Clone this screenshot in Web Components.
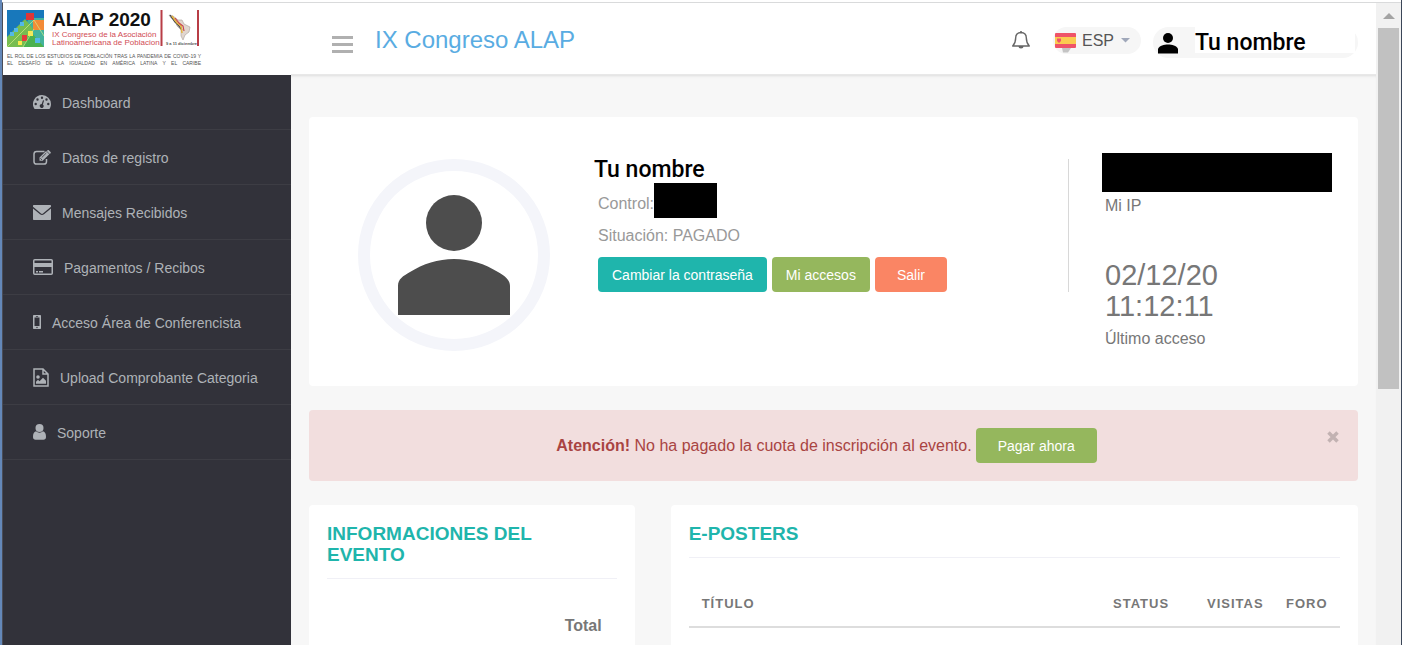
<!DOCTYPE html>
<html lang="es">
<head>
<meta charset="utf-8">
<title>IX Congreso ALAP</title>
<style>
html, body { margin: 0; height: 100%; }
body { font-family: "Liberation Sans", Arial, sans-serif; font-size: 16px; color: #777; background: #fff; overflow: hidden; }
</style>
</head>
<body>
<app-frame>
  <brand-logo slot="brand"></brand-logo>
  <top-bar slot="bar"></top-bar>
  <side-menu slot="menu">
    <menu-item icon="gauge">Dashboard</menu-item>
    <menu-item icon="edit">Datos de registro</menu-item>
    <menu-item icon="mail">Mensajes Recibidos</menu-item>
    <menu-item icon="card">Pagamentos / Recibos</menu-item>
    <menu-item icon="phone">Acceso Área de Conferencista</menu-item>
    <menu-item icon="file">Upload Comprobante Categoria</menu-item>
    <menu-item icon="user">Soporte</menu-item>
  </side-menu>
  <profile-card></profile-card>
  <alert-bar></alert-bar>
  <event-panels></event-panels>
</app-frame>

<script>
const define = (name, html, setup) => customElements.define(name, class extends HTMLElement {
  constructor() {
    super();
    const t = document.createElement('template');
    t.innerHTML = '<style>*{box-sizing:border-box}</style>' + html;
    this.attachShadow({ mode: 'open' }).append(t.content.cloneNode(true));
  }
  connectedCallback() { if (setup) setup(this, this.shadowRoot); }
});

const icons = {
  gauge: [18, 16, '<path fill="currentColor" fill-rule="evenodd" d="M9 1a9 9 0 0 1 9 9c0 1.800-.5 3.400-1.400 4.800-.2.200-.4.300-.7.300H2.100c-.3 0-.5-.1-.7-.3A9 9 0 0 1 9 1zM9 2.500a1.200 1.200 0 1 0 0 2.400 1.200 1.200 0 0 0 0-2.400zM4.500 4.300a1.200 1.200 0 1 0 0 2.400 1.200 1.200 0 0 0 0-2.400zM13.500 4.300a1.200 1.200 0 1 0 0 2.400 1.200 1.200 0 0 0 0-2.400zM2.700 8.800a1.200 1.200 0 1 0 0 2.400 1.200 1.200 0 0 0 0-2.400zM15.300 8.800a1.200 1.200 0 1 0 0 2.400 1.200 1.200 0 0 0 0-2.400zM10 6.200 8.700 10a2 2 0 1 0 1.200.4l1.200-3.900z"/>'],
  edit: [18, 15, '<path fill="none" stroke="currentColor" stroke-width="1.500" d="M11.500 1.500H3.600A2.600 2.600 0 0 0 1 4.100v7.300A2.600 2.600 0 0 0 3.600 14h7.300a2.600 2.600 0 0 0 2.600-2.600V9"/><path fill="currentColor" d="m6.500 7.600 6.600-6.600 3.200 3.200-6.600 6.600H6.500zM13.800.9l.8-.7c.4-.3.800-.3 1.200 0l1.800 1.800c.3.400.3.800 0 1.200l-.8.700z"/><path stroke="#32323a" stroke-width=".8" d="m8.700 7.600 4.600-4.600M7.300 8.300l1.700 1.700"/>'],
  mail: [18, 15, '<path fill="currentColor" d="M1 0h16c.6 0 1 .4 1 1v.8L10 8.600c-.7.500-1.300.5-2 0L0 1.800V1c0-.6.400-1 1-1z"/><path fill="currentColor" d="m0 3.400 7 5.900c1.400 1 2.600 1 4 0l7-5.900V14c0 .6-.4 1-1 1H1c-.6 0-1-.4-1-1z"/>'],
  card: [20, 16, '<rect x=".75" y=".75" width="18.500" height="14.500" rx="1" fill="none" stroke="currentColor" stroke-width="1.500"/><path fill="currentColor" d="M1 4h18v4H1zM3 12h2v1.500H3zM6 12h4v1.500H6z"/>'],
  phone: [8, 14, '<path fill="currentColor" fill-rule="evenodd" d="M1 0h6c.6 0 1 .4 1 1v12c0 .6-.4 1-1 1H1c-.6 0-1-.4-1-1V1C0 .4.400 0 1 0zM1.500 2.500V11h5V2.500zM2.900 1v.7h2.200V1zM4 11.800a.7.700 0 1 0 0 1.400.7.700 0 0 0 0-1.400z"/>'],
  file: [16, 19, '<path fill="none" stroke="currentColor" stroke-width="1.500" d="M1 1h9l5 5v12H1zM10 1v5h5"/><circle cx="5" cy="9" r="1.800" fill="currentColor"/><path fill="currentColor" d="M3 15.800v-2l2-2 1.500 1.500L10 9.800l3 3v3z"/>'],
  user: [13, 16, '<circle cx="6.500" cy="4" r="4" fill="currentColor"/><path fill="currentColor" d="M3 7.200a5 5 0 0 0 7 0c2.200.5 3 2.600 3 5.800 0 1.800-1 2.800-2.600 2.800H2.600C1 15.800 0 14.800 0 13c0-3.200.8-5.300 3-5.800z"/>'],
  bell: [20, 20, '<path fill="none" stroke="currentColor" stroke-width="1.400" stroke-linejoin="round" d="M10 2.500c-3.600 0-5.300 2.400-5.300 5.300 0 3.700-.7 5.800-3 8.200h16.600c-2.300-2.400-3-4.500-3-8.200 0-2.900-1.700-5.300-5.300-5.300z"/><path fill="currentColor" d="M9.200 1h1.600v2H9.200zM7.500 16h5a2.500 2.500 0 0 1-5 0z"/>'],
  burger: [21, 18, '<path fill="currentColor" d="M0 0h21v3H0zM0 7h21v3H0zM0 14h21v3H0z"/>'],
  person: [20, 21, '<circle cx="10" cy="5" r="5" fill="currentColor"/><path fill="currentColor" d="M0 20.500v-4.800C1.500 12.800 6 11.500 10 11.500s8.500 1.300 10 4.200v4.800z"/>'],
  cross: [12, 12, '<path stroke="currentColor" stroke-width="3.500" d="m1.500 1.500 9 9m0-9-9 9"/>'],
  caret: [9, 5, '<path fill="currentColor" d="M0 0h9L4.500 4.500z"/>'],
  flag: [21, 20, '<path d="M7 15h9l-3 4.500H8z" fill="#c4c4c4"/><rect width="21" height="15" rx="1" fill="#ef5368"/><path fill="#fbcb50" d="M0 4h21v7H0z"/><path fill="#ef5368" d="M2 5.500h4V8L4 10 2 8z"/>']
};
define('ui-icon', '<style>:host{display:inline-flex;flex:none}svg{display:block}</style><svg aria-hidden="true"></svg>', (el, root) => {
  const [w, h, body] = icons[el.getAttribute('name')];
  const svg = root.querySelector('svg');
  svg.setAttribute('width', w); svg.setAttribute('height', h);
  svg.setAttribute('viewBox', `0 0 ${w} ${h}`);
  svg.innerHTML = body;
});

define('ui-button', `<style>
:host{display:inline-flex}
button{height:35px;padding:0 14px;border:0;border-radius:4px;background:#95b75d;color:#fff;font:inherit;font-size:14px;white-space:nowrap;cursor:pointer}
:host([tone=teal]) button{background:#1fb5ac}
:host([tone=coral]) button{background:#fa8564}
:host([wide]) button{padding:0 22px}
</style><button type="button"><slot></slot></button>`);

define('app-frame', `<style>
:host{display:grid;grid-template-columns:minmax(0,1fr) 25px;height:100vh;background:#fff;overflow:hidden;
  border-left:2px solid #6488b9;border-right:1px solid #3b4658;padding-top:2px}
.page{display:grid;grid-template-columns:288px minmax(0,1fr);grid-template-rows:72px minmax(0,1fr);border-left:1px solid #4a4d57;border-top:1px solid #d9dadb;overflow:hidden}
.menu{background:#32323a}
main{background:#f7f7f7;padding:42px 18px 0;display:flex;flex-direction:column;gap:24px;overflow:hidden;box-shadow:inset 0 3px 3px -2px #ddd}
.track{background:#f1f1f1;border-top:1px solid #d9dadb;display:flex;flex-direction:column;padding:0 2px}
.up{height:25px;display:grid;place-items:center;color:#a3a3a3}
.thumb{background:#c1c1c1;flex:0 0 58%;max-height:361px}
</style>
<div class="page">
  <div><slot name="brand"></slot></div>
  <slot name="bar"></slot>
  <div class="menu"><slot name="menu"></slot></div>
  <main><slot></slot></main>
</div>
<div class="track"><div class="up"><svg width="12" height="6"><path d="M0 6h12L6 0z" fill="currentColor"/></svg></div><div class="thumb"></div></div>`);

define('brand-logo', `<style>
:host{display:block;padding:6px 0 0 4px}
.top{display:flex;align-items:flex-start}
.art{margin-top:1px}
.words{width:116px;padding-left:8px;white-space:nowrap}
strong{display:block;font-size:19px;line-height:22px;color:#111}
.red{font-size:8px;line-height:8px;color:#d14b54}
.motto{margin-top:5px;font-size:5px;line-height:7px;color:#555;width:194px;text-align-last:justify}
</style>
<div class="top">
<svg class="art" width="37" height="37" viewBox="0 0 37 37"><path fill="#1878bb" d="M0 0h37v37H0z"/><path fill="#43b39c" d="M22 8h15v29H8z"/><path fill="#77bd50" d="M0 27 18 9l8 10-10 18H0z"/><path fill="#4bb14f" d="m24 22 13 15H16z"/><path fill="#de3637" d="M19 3h8v7h-8z"/><path fill="#f38b37" d="M26 10h11v10H26z"/><path fill="#e53b3b" d="M15 25h5v6h-5z"/><path fill="#fae94e" d="M21 21h5v5h-5zM11 31h4v4h-4z"/><path fill="#53b9e8" d="M7 18h4v4H7zM13 12h4v4h-4zM3 22h4v4H3zM28 28h5v5h-5z"/><path d="M0 37 27 10 37 26M16 37l11-18" fill="none" stroke="#d4ec85" stroke-width=".7"/></svg>
<div class="words"><strong>ALAP 2020</strong><div class="red">IX Congreso de la Asociación</div><div class="red">Latinoamericana de Poblacion</div></div>
<svg width="39" height="39" viewBox="0 0 39 39"><path d="M1.500 1v36M38 1v36" stroke="#b83d46" stroke-width="2"/><path fill="#e1d6cf" stroke="#a89d98" stroke-width=".6" d="m9 6 4 1 5 4 4 0 2 4 6 3-1 5-4 3-2 5-2-4 0-6-4-4-1-5-5-3z"/><path fill="none" stroke="#444" stroke-width="1.200" d="m10 6 5 7 3 3 4 5"/><path fill="none" stroke="#e3b33d" stroke-width="1.500" d="m12 7 5 7 4 3 1 7"/><path fill="none" stroke="#c9444b" stroke-width="1.200" d="m15 9 4 5 4 3 1 5"/><text x="6" y="36" font-size="4" font-family="Liberation Sans" font-weight="bold" fill="#555">9 a 11 diciembre</text></svg>
</div>
<div class="motto"><div>EL ROL DE LOS ESTUDIOS DE POBLACIÓN TRAS LA PANDEMIA DE COVID-19 Y</div><div>EL DESAFÍO DE LA IGUALDAD EN AMÉRICA LATINA Y EL CARIBE</div></div>`);

define('top-bar', `<style>
:host{display:flex;align-items:flex-start;padding:24px 18px 0 41px;border-bottom:1px solid #e8e8e8;background:#fff}
button{border:0;padding:0;background:none;cursor:pointer;display:flex}
.burger{color:#b0b0b0;margin-top:9px}
h1{margin:0 auto 0 22px;font-size:24px;font-weight:400;line-height:26px;color:#59ace2;white-space:nowrap}
.bell{color:#666;margin:3px 22px 0 0}
.lang{display:flex;align-items:center;gap:6px;height:27px;border-radius:14px;background:#f6f6f6;padding:0 11px 0 2px;margin-right:12px;color:#a0a8ba}
.lang ui-icon:first-child{margin-top:4px}
select{appearance:none;border:0;background:none;padding:0;width:33px;font:inherit;font-size:16px;color:#555}
.me{display:flex;width:205px;height:31px;border-radius:16px;background:#f6f6f6;color:#000;padding:0 3px 5px 5px;gap:17px}
.me ui-icon{margin-top:6px}
.me span{flex:1;text-align:left;background:#fff;font:500 23px/32px Roboto,sans-serif;height:26px;white-space:nowrap}
</style>
<button class="burger" type="button" aria-label="Menú"><ui-icon name="burger"></ui-icon></button>
<h1>IX Congreso ALAP</h1>
<button class="bell" type="button" aria-label="Avisos"><ui-icon name="bell"></ui-icon></button>
<div class="lang"><ui-icon name="flag"></ui-icon><select aria-label="Idioma"><option>ESP</option></select><ui-icon name="caret"></ui-icon></div>
<button class="me" type="button"><ui-icon name="person"></ui-icon><span>Tu nombre</span></button>`);

define('side-menu', '<style>:host{display:block}nav{display:flex;flex-direction:column}</style><nav><slot></slot></nav>');
define('menu-item', `<style>
:host{display:block}
a{display:flex;align-items:center;gap:11px;height:55px;padding:0 0 0 30px;border-bottom:1px solid #3d3d44;color:#aeb2b7;text-decoration:none;font-size:14px;white-space:nowrap}
span{padding-top:2px}
</style><a href="#"><span><slot></slot></span></a>`, (el, root) => {
  const link = root.querySelector('a');
  if (link.querySelector('ui-icon')) return;
  const icon = document.createElement('ui-icon');
  icon.setAttribute('name', el.getAttribute('icon'));
  link.prepend(icon);
});

define('profile-card', `<style>
:host{display:grid;grid-template-columns:285fr 475fr 289fr;align-items:start;background:#fff;border-radius:4px;padding:42px 0 35px}
.avatar{justify-self:center;margin-left:4px;width:192px;height:192px;border:12px solid #f4f5fa;border-radius:50%}
.info{height:133px;border-right:1px solid #d8d8d8}
h2{margin:0 0 2px;font:500 23px/22px Roboto,sans-serif;color:#000}
.details{padding-left:4px;color:#999}
.row{display:flex;align-items:center;height:35px}
.control span{padding-top:7px}
.mask{background:#000}
.control .mask{width:63px;height:35px}
.actions{display:flex;gap:5px;margin-top:4px}
.stats{padding:0 26px 0 33px;margin-top:-6px}
.stats .mask{height:39px}
.stats dl{margin:0 3px;display:flex;flex-direction:column}
dt{line-height:18px;order:2;margin-top:5px}
dd{margin:0;order:1;font-size:29px;line-height:31px}
.last{padding-top:45px}
dl.last dt{margin-top:8px}
</style>
<svg class="avatar" viewBox="0 0 168 168" role="img" aria-label="Avatar"><circle cx="84" cy="52" r="28" fill="#4d4d4d"/><path fill="#4d4d4d" d="M28 144v-29c0-7 5-10 12-14 13-8 28-13 44-13s31 5 44 13c7 4 12 8 12 14v29z"/></svg>
<div class="info"><h2>Tu nombre</h2><div class="details">
<div class="row control"><span>Control:</span><div class="mask"></div></div>
<div class="row">Situación: PAGADO</div>
<div class="actions"><ui-button tone="teal">Cambiar la contraseña</ui-button><ui-button>Mi accesos</ui-button><ui-button tone="coral" wide>Salir</ui-button></div></div></div>
<div class="stats"><div class="mask"></div>
<dl><dt>Mi IP</dt></dl>
<dl class="last"><dt>Último acceso</dt><dd>02/12/20<br>11:12:11</dd></dl></div>`);

define('alert-bar', `<style>
:host{display:flex;align-items:center;justify-content:center;gap:4px;position:relative;padding:18px 32px 18px 18px;background:#f2dede;border-radius:4px;color:#a94442}
p{margin:0;line-height:20px}
.close{position:absolute;right:19px;top:21px;border:0;padding:0;background:none;color:#c2b2b2;display:flex;cursor:pointer}
</style><p><strong>Atención!</strong> No ha pagado la cuota de inscripción al evento.</p><ui-button wide>Pagar ahora</ui-button>
<button class="close" type="button" aria-label="Cerrar"><ui-icon name="cross"></ui-icon></button>`);

define('panel-card', `<style>
:host{display:block;background:#fff;border-radius:4px;padding:18px 18px 0;min-height:200px}
h2{margin:0;padding-bottom:13px;border-bottom:1px solid #f0f0f6;font-size:19px;line-height:21px;color:#1fb5ac;text-transform:uppercase}
</style><h2><slot name="title"></slot></h2><slot></slot>`);

define('event-panels', `<style>
:host{display:grid;grid-template-columns:repeat(12,minmax(0,1fr));gap:36px}
.a{grid-column:span 4}.b{grid-column:span 8}
table{width:100%;border-collapse:collapse}
.a table{margin-top:36px}
.a th{text-align:right;padding:0 15px 0 0;line-height:22px}
.b table{margin-top:24px;table-layout:fixed}
.b th{padding:12px 0 12px 13px;border-bottom:2px solid #ddd;text-align:left;font-size:13px;line-height:20px;letter-spacing:1px}
.s{width:94px}.v{width:79px}.f{width:67px}
</style>
<panel-card class="a"><span slot="title">Informaciones del<br>Evento</span><table><tr><th>Total</th></tr></table></panel-card>
<panel-card class="b"><span slot="title">E-Posters</span><table><thead><tr><th>TÍTULO</th><th class="s">STATUS</th><th class="v">VISITAS</th><th class="f">FORO</th></tr></thead></table></panel-card>`);
</script>
</body>
</html>
